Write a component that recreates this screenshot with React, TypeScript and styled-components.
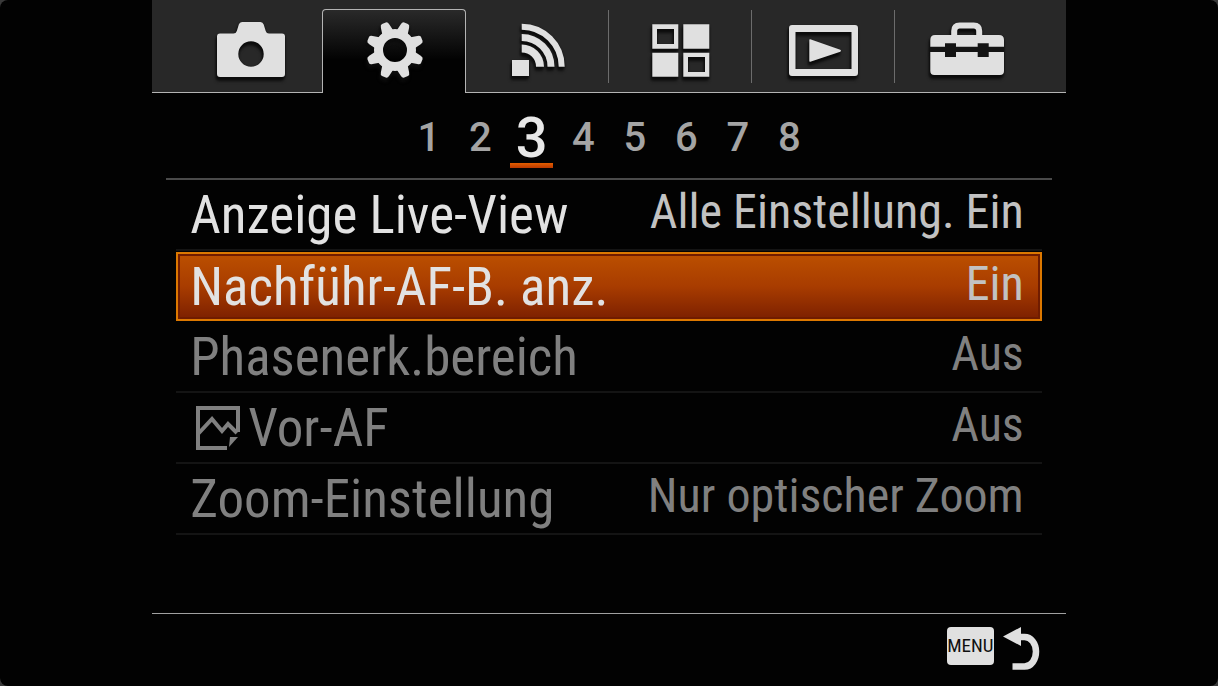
import React from "react";
import styled, { createGlobalStyle, css } from "styled-components";

const GlobalStyle = createGlobalStyle`
  *, *::before, *::after { box-sizing: border-box; }
  body { margin: 0; background: #3a3a3a; }
  button { margin: 0; padding: 0; border: 0; background: none; color: inherit; font: inherit; cursor: pointer; }
`;

const narrow = `"Roboto Condensed", "Liberation Sans Narrow", "Liberation Sans", sans-serif`;

const Screen = styled.div`
  min-height: 100vh;
  background: #020202;
  border-radius: 8px;
  color: #e0e0e0;
  font-family: ${narrow};
`;

const Menu = styled.main`
  display: flex;
  flex-direction: column;
  width: 75%;
  min-height: 100vh;
  margin: 0 auto;
`;

const TabBar = styled.nav`
  display: flex;
  align-items: flex-end;
  height: 93px;
  padding: 0 27px;
  background: #282828;
  border-bottom: 1px solid #b4b4b4;
`;

const Tab = styled.button<{ $active?: boolean; $divided?: boolean }>`
  position: relative;
  display: flex;
  flex: none;
  align-items: flex-end;
  justify-content: center;
  width: calc(100% / 6);
  height: 92px;
  padding-bottom: 8px;
  ${(p) =>
    p.$active &&
    css`
      height: 84px;
      margin-bottom: -1px;
      padding-bottom: 9px;
      border: 1px solid #b4b4b4;
      border-bottom: 0;
      border-radius: 4px 4px 0 0;
      background: linear-gradient(#2a2a2a, #020202 60%);
    `}
  ${(p) =>
    p.$divided &&
    css`
      &::after {
        content: "";
        position: absolute;
        top: 10px;
        right: 0;
        width: 1px;
        height: 73px;
        background: #6c6c6c;
      }
    `}
`;

const TabIcon = styled.svg`
  display: block;
  flex: none;
  width: 80px;
  height: 68px;
  fill: #e0e0e0;
  filter: drop-shadow(0 1px 1px #0c0c0c) drop-shadow(-1px 3px 1px #0c0c0c);
`;

const Pager = styled.nav`
  display: flex;
  justify-content: center;
  height: 87px;
  margin: 0 14px;
  border-bottom: 2px solid #4a4a4a;
`;

const Pages = styled.div`
  display: flex;
  align-items: center;
  width: 412px;
  padding-top: 4px;
`;

const PageButton = styled.button<{ $active?: boolean }>`
  display: flex;
  flex: 1;
  flex-direction: column;
  align-items: center;
  justify-content: center;
  height: 84px;
  color: ${(p) => (p.$active ? "#e8e8e8" : "#a4a4a4")};
  font-family: Roboto, "Liberation Sans", sans-serif;
  font-size: ${(p) => (p.$active ? 56 : 40)}px;
  font-weight: 500;
  line-height: 84px;
`;

const ActivePage = styled.span`
  display: flex;
  flex-direction: column;
  align-items: center;
  height: 84px;

  &::after {
    content: "";
    flex: none;
    width: 43px;
    height: 5px;
    margin-top: -17px;
    background: linear-gradient(#e45e00, #b83800);
  }
`;

const List = styled.ul`
  flex: 1;
  margin: 0;
  padding: 0 24px;
  list-style: none;
`;

const Row = styled.button<{ $state: "normal" | "selected" | "disabled" }>`
  display: flex;
  justify-content: space-between;
  width: 100%;
  height: 71px;
  padding: 0 18px 0 14px;
  border-bottom: 2px solid #141414;
  color: ${(p) => (p.$state === "disabled" ? "#808080" : "#e2e2e2")};
  ${(p) =>
    p.$state === "selected" &&
    css`
      height: 69px;
      margin: 1px 0;
      padding: 0 16px 0 12px;
      border: 2px solid #dc7800;
      background: linear-gradient(#bc5000, #a83c00 50%, #7c2000);
      box-shadow: inset 0 0 0 2px #701c00;
    `}
`;

const Label = styled.span<{ $selected: boolean }>`
  display: flex;
  align-items: center;
  font-size: 53px;
  line-height: ${(p) => (p.$selected ? 64 : 68)}px;
  white-space: nowrap;
`;

const Value = styled.span<{ $selected: boolean; $dim: boolean }>`
  font-size: 48px;
  line-height: ${(p) => (p.$selected ? 60 : 64)}px;
  color: ${(p) => (p.$dim ? "#808080" : "#c2c2c2")};
  white-space: nowrap;
`;

const StillIcon = styled.svg`
  width: 44px;
  height: 44px;
  margin: 0 8px 0 6px;
  fill: none;
  stroke: #808080;
  stroke-width: 4;
`;

const Footer = styled.footer`
  display: flex;
  align-items: flex-start;
  justify-content: flex-end;
  height: 73px;
  padding: 13px 26px 0;
  border-top: 1px solid #a0a0a0;
`;

const BackButton = styled.button`
  display: flex;
  gap: 8px;
`;

const MenuKey = styled.span`
  width: 47px;
  height: 38px;
  border-radius: 4px;
  background: #e0e0e0;
  color: #101010;
  font-size: 19px;
  line-height: 38px;
  text-align: center;
`;

const BackArrow = styled.svg`
  width: 38px;
  height: 44px;
`;

const teeth = [0, 1, 2, 3, 4, 5, 6, 7].map((i) => 22.5 + i * 45);

const tabs = [
  {
    name: "Kamera",
    box: "211 16 80 68",
    art: (
      <path
        fillRule="evenodd"
        d="M220 33.5h13.500q2.500 0 3.300-2.500l2-6.500q.800-2.500 3.200-2.500h18.500q2.400 0 3.200 2.500l2 6.500q.800 2.500 3.300 2.500h13q3 0 3 3v37.500q0 3-3 3h-62q-3 0-3-3V36.500q0-3 3-3zM251 41.300a12.700 12.700 0 1 0 0 25.400 12.700 12.700 0 1 0 0-25.400z"
      />
    ),
  },
  {
    name: "Einstellungen",
    box: "354 16 80 68",
    active: true,
    art: (
      <>
        <circle cx="395" cy="50" r="16.500" fill="none" stroke="#e0e0e0" strokeWidth="9" />
        {teeth.map((a) => (
          <path
            key={a}
            transform={`rotate(${a} 395 50)`}
            d="M389 32l1.500-8q.500-3 2.500-3h4q2 0 2.500 3l1.500 8z"
          />
        ))}
      </>
    ),
  },
  {
    name: "Drahtlos",
    box: "497 16 80 68",
    divided: true,
    art: (
      <>
        <rect x="512" y="60" width="17" height="16" />
        <g fill="none" stroke="#e0e0e0">
          <path strokeWidth="6" d="M521.700 26.700a40 40 0 0 1 40 40" />
          <path strokeWidth="7" d="M521.700 37.400a29.300 29.300 0 0 1 29.300 29.300" />
          <path strokeWidth="8" d="M521.700 48.400a18.300 18.300 0 0 1 18.300 18.300" />
        </g>
      </>
    ),
  },
  {
    name: "Applikation",
    box: "641 16 80 68",
    divided: true,
    art: (
      <>
        <path fillRule="evenodd" d="M652.300 24.300h26v24.400h-26zM657 29v15h17V29z" />
        <path d="M683.300 24.300h26v24.400h-26zM652.300 52.700h26v24h-26z" />
        <path fillRule="evenodd" d="M683.300 52.700h26v24h-26zM688 57v15h17V57z" />
      </>
    ),
  },
  {
    name: "Wiedergabe",
    box: "784 16 80 68",
    divided: true,
    art: (
      <>
        <path
          fillRule="evenodd"
          d="M792 25h63q3 0 3 3v45q0 3-3 3h-63q-3 0-3-3V28q0-3 3-3zM795.500 32v37h56V32z"
        />
        <path d="M809.300 40v21q0 1 1 .700l30-10q1.500-1 0-2l-30-10.400q-1-.300-1 .700z" />
      </>
    ),
  },
  {
    name: "Setup",
    box: "927 16 80 68",
    art: (
      <>
        <path
          fill="none"
          stroke="#e0e0e0"
          strokeWidth="6"
          d="M954.200 36v-5q0-5.500 5.500-5.500h14q5.500 0 5.500 5.500v5"
        />
        <path fill="#141414" d="M930 46h74v7h-74zM945 43h11v14h-11zM977.700 43h11v14h-11z" />
        <path d="M935 35h64q5 0 5 5v6.700h-15.300v-3.400h-11v3.400H956v-3.400h-11v3.400h-14.700V40q0-5 4.700-5z" />
        <path d="M930.300 52H945v5h11v-5h21.700v5h11v-5H1004v19q0 4-4 4h-65.700q-4 0-4-4z" />
      </>
    ),
  },
];

type RowState = "normal" | "selected" | "disabled";

const rows: { label: string; value: string; state: RowState; still?: boolean }[] = [
  { label: "Anzeige Live-View", value: "Alle Einstellung. Ein", state: "normal" },
  { label: "Nachführ-AF-B. anz.", value: "Ein", state: "selected" },
  { label: "Phasenerk.bereich", value: "Aus", state: "disabled" },
  { label: "Vor-AF", value: "Aus", state: "disabled", still: true },
  { label: "Zoom-Einstellung", value: "Nur optischer Zoom", state: "disabled" },
];

const currentPage = 3;

export default function App() {
  return (
    <>
      <GlobalStyle />
      <Screen>
        <Menu>
          <TabBar>
            {tabs.map((t) => (
              <Tab key={t.name} aria-label={t.name} $active={t.active} $divided={t.divided}>
                <TabIcon viewBox={t.box}>{t.art}</TabIcon>
              </Tab>
            ))}
          </TabBar>
          <Pager>
            <Pages>
              {[1, 2, 3, 4, 5, 6, 7, 8].map((n) => (
                <PageButton key={n} $active={n === currentPage}>
                  {n === currentPage ? <ActivePage>{n}</ActivePage> : n}
                </PageButton>
              ))}
            </Pages>
          </Pager>
          <List>
            {rows.map((r) => (
              <li key={r.label}>
                <Row $state={r.state} aria-disabled={r.state === "disabled"}>
                  <Label $selected={r.state === "selected"}>
                    {r.still && (
                      <StillIcon viewBox="0 0 44 44" aria-hidden="true">
                        <path d="M31 42H2V2h40v24M2 28l14-15 10 12 6-7 9 9" />
                        <path fill="#808080" stroke="none" d="M34 31h8l-9 10z" />
                      </StillIcon>
                    )}
                    {r.label}
                  </Label>
                  <Value $selected={r.state === "selected"} $dim={r.state === "disabled"}>
                    {r.value}
                  </Value>
                </Row>
              </li>
            ))}
          </List>
          <Footer>
            <BackButton>
              <MenuKey>MENU</MenuKey>
              <BackArrow viewBox="1003 625 38 44" aria-label="Zurück">
                <path
                  fill="none"
                  stroke="#e0e0e0"
                  strokeWidth="6.500"
                  d="M1013.500 664.500h12c7 0 11.500-7 11.500-15s-5-14.500-11.500-14.500h-5"
                />
                <path fill="#e0e0e0" d="M1004 634.500l18-9.500v19z" />
              </BackArrow>
            </BackButton>
          </Footer>
        </Menu>
      </Screen>
    </>
  );
}
